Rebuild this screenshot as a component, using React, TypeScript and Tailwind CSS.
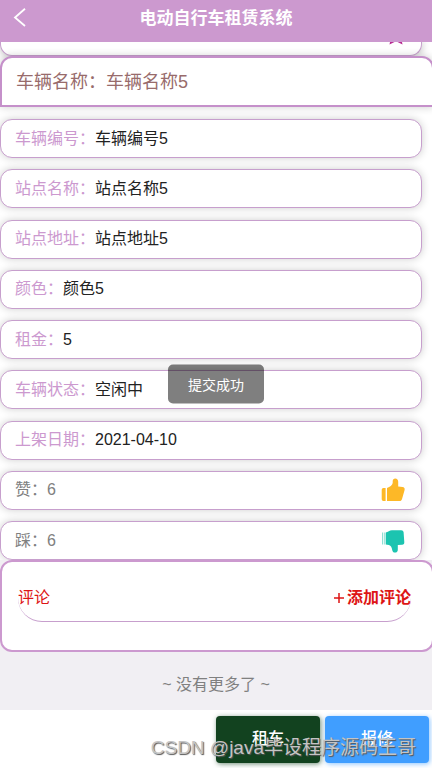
import React from "react";

const details = [
  { label: "车辆编号：", value: "车辆编号5" },
  { label: "站点名称：", value: "站点名称5" },
  { label: "站点地址：", value: "站点地址5" },
  { label: "颜色：", value: "颜色5" },
  { label: "租金：", value: "5" },
  { label: "车辆状态：", value: "空闲中" },
  { label: "上架日期：", value: "2021-04-10" },
];

const rowClass =
  "flex h-[39px] items-center rounded-[12px] border border-[#c79fcd] bg-white pr-4 pl-[14px] text-[16px] leading-6 shadow-[0_0_8px_rgba(0,0,0,0.2)]";

function ThumbUp() {
  return (
    <svg viewBox="0 0 24 24" className="h-6 w-6" aria-hidden="true">
      <path
        fill="#fdb827"
        d="M2.400 10h2.200v13H2.400A1.700 1.700 0 0 1 .7 21.300v-9.600A1.700 1.700 0 0 1 2.400 10ZM6 10c3-.8 5.400-2.700 5.700-4.900V2.900C11.700 1.300 12.800.4 14.200.4c1.900 0 3 1.500 3 3.300v4.900l4.300.5c1.700.2 2.500 1.300 2.100 2.800l-2.500 8.800c-.4 1.500-1.200 2.300-2.600 2.300H6Z"
      />
    </svg>
  );
}

function ThumbDown() {
  return (
    <svg viewBox="0 0 24 24" className="h-6 w-6" aria-hidden="true">
      <path fill="#8fdfd4" d="M1 3.500h1.200v12H1ZM3 3.500h.8v12H3Z" />
      <path
        fill="#1cc4b0"
        d="M4.700 3.500C7 3 8.500 1.500 11 1.300h9.200c1.400 0 2.200.7 2.400 2l.7 9.700c.1 1.700-.6 2.700-2.200 2.700l-4.300.3v4.700c0 1.700-1.100 2.900-2.700 2.900-1.700 0-2.600-1.100-2.900-2.700-.4-2.600-1.200-4.100-3.300-4.900l-3.200-.5Z"
      />
    </svg>
  );
}

function Header() {
  return (
    <header className="relative z-10 flex h-[42px] shrink-0 items-center justify-center bg-[#cc99cf]">
      <button type="button" aria-label="返回" className="absolute top-2 left-3 text-white">
        <svg viewBox="0 0 16 20" className="h-5 w-4" fill="none" stroke="currentColor" strokeWidth="1.800">
          <path d="M13 .8 3 9.500l10 8.500" />
        </svg>
      </button>
      <h1 className="pb-1 text-[17px] leading-6 font-bold text-white">电动自行车租赁系统</h1>
    </header>
  );
}

function App() {
  return (
    <div className="relative flex min-h-screen flex-col overflow-x-hidden bg-white font-['Liberation_Sans','Noto_Sans_CJK_SC',sans-serif]">
      <Header />

      <main className="flex flex-1 flex-col">
        <div className="relative mr-[10px] h-[14px] overflow-hidden rounded-b-[12px] border border-t-0 border-[#c79fcd] bg-white shadow-[0_0_8px_rgba(0,0,0,0.3)]">
          <svg viewBox="0 0 14 3" className="absolute top-0 right-[18px] h-[3px] w-[14px]" aria-hidden="true">
            <path fill="#b82a92" d="M1 0h4.500L.5 2.600ZM8.500 0H13l.5 2.600Z" />
          </svg>
        </div>

        <h2 className="relative -mr-[2px] flex h-[51px] items-center rounded-t-[12px] border-2 border-[#c590ca] bg-white pl-[14px] text-[18px] leading-6 text-[#986b6b] shadow-[0_0_8px_rgba(0,0,0,0.2)]">
          车辆名称：车辆名称5
        </h2>

        <div className="mt-3 mr-[10px] flex flex-1 flex-col justify-between gap-[10px]">
          {details.map((item) => (
            <div key={item.label} className={rowClass}>
              <span className="text-[#cc99cf]">{item.label}</span>
              <span className="text-[#222222]">{item.value}</span>
            </div>
          ))}
          <div className={rowClass}>
            <span className="flex-1 text-[#808080]">赞：6</span>
            <button type="button" aria-label="赞">
              <ThumbUp />
            </button>
          </div>
          <div className={rowClass}>
            <span className="flex-1 text-[#808080]">踩：6</span>
            <button type="button" aria-label="踩">
              <ThumbDown />
            </button>
          </div>
        </div>

        {/* the card runs slightly past the right edge, like the title card */}
        <div className="bg-[#f1eff3]">
          <section className="relative -mr-[2px] h-[92px] rounded-[12px] border-2 border-[#cc99cf] bg-white pt-3 pr-[21px] pl-4">
            <div className="flex h-12 items-center justify-between rounded-b-[24px] border-b border-[#c79fcd] text-[16px] leading-6 text-[#dd1515]">
              <h3>评论</h3>
              <button type="button" className="flex items-center gap-[2px] font-bold">
                <svg viewBox="0 0 12 12" className="h-3 w-3" stroke="currentColor" strokeWidth="1.500" aria-hidden="true">
                  <path d="M6 1v10M1 6h10" />
                </svg>
                添加评论
              </button>
            </div>
          </section>
        </div>

        <p className="flex h-[58px] items-center justify-center bg-[#f1eff3] pt-2 text-[16px] leading-6 text-[#808080]">
          ~ 没有更多了 ~
        </p>
      </main>

      <footer className="flex h-[58px] shrink-0 items-center justify-end gap-[5px] bg-white pr-[3px] text-[16px] text-white">
        <button
          type="button"
          className="h-[47px] w-[104px] rounded-[4px] bg-[#12421f] font-medium shadow-[1px_1px_5px_rgba(18,66,31,0.6)]"
        >
          租车
        </button>
        <button
          type="button"
          className="h-[47px] w-[104px] rounded-[4px] bg-[#409eff] font-medium shadow-[1px_1px_5px_rgba(64,158,255,0.6)]"
        >
          报修
        </button>
      </footer>

      <div
        role="status"
        className="absolute top-1/2 left-1/2 flex h-[39px] -translate-x-1/2 -translate-y-1/2 items-center rounded-[5px] bg-black/50 px-5 text-[14px] leading-5 text-white"
      >
        提交成功
      </div>

      <span className="pointer-events-none absolute right-4 bottom-2 text-[19px] leading-6 whitespace-nowrap text-[#c4c4c4] [text-shadow:1px_1px_1px_#555555]">
        CSDN @java毕设程序源码王哥
      </span>
    </div>
  );
}

export default App;
